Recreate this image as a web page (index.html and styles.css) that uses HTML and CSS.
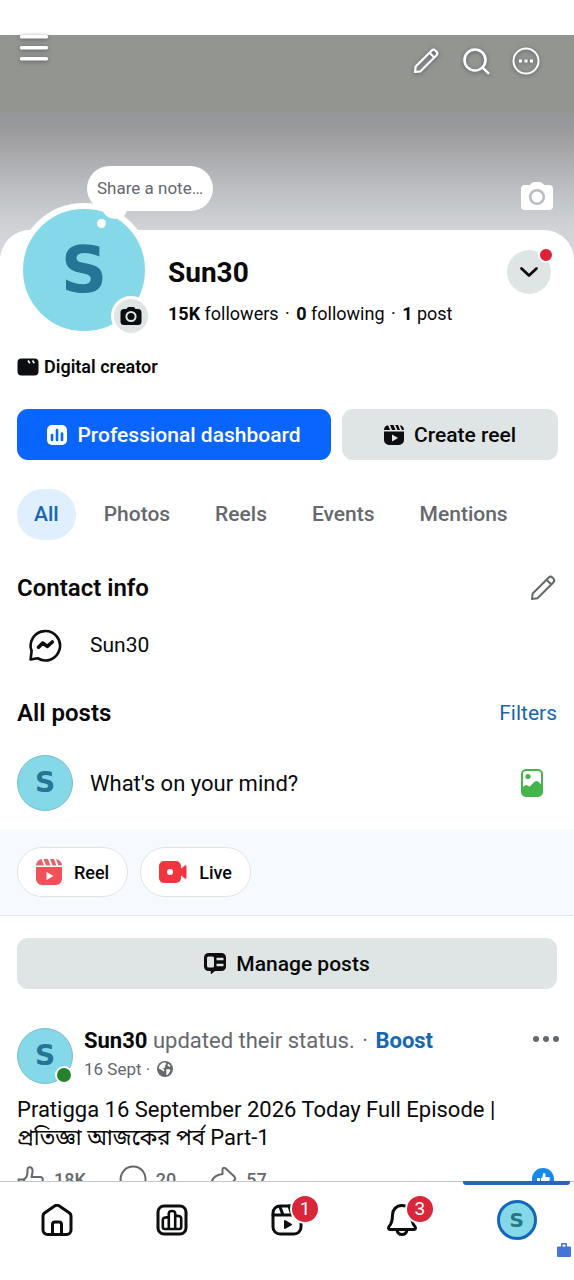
FILE: index.html
```html
<!DOCTYPE html>
<html lang="en">
<head>
<meta charset="utf-8">
<meta name="viewport" content="width=device-width, initial-scale=1">
<title>Sun30</title>
<link rel="stylesheet" href="styles.css">
</head>
<body>
<div class="app">
  <main class="content">
    <header class="cover">
      <div class="cover-bar">
        <button class="icon-btn menu" aria-label="Menu">
          <svg width="36" height="30" viewBox="0 0 36 30" stroke="#fff" stroke-width="3.4" stroke-linecap="round"><path d="M5.500 1.800h25M5.500 12.700h25M5.500 23.700h25"/></svg>
        </button>
        <div class="cover-actions">
          <button class="icon-btn" aria-label="Edit"><svg width="28" height="28" viewBox="0 0 28 28" fill="none" stroke="#fff" stroke-width="2.200" stroke-linejoin="round"><path d="M3 25l.7-5.500L19.500 3.700a2.900 2.900 0 0 1 4.100 0l.7.7a2.900 2.900 0 0 1 0 4.100L8.500 24.300z"/><path d="M17.500 5.700l4.800 4.800"/></svg></button>
          <button class="icon-btn" aria-label="Search"><svg width="28" height="28" viewBox="0 0 28 28" fill="none" stroke="#fff" stroke-width="2.600" stroke-linecap="round"><circle cx="13" cy="13" r="10.500"/><path d="M20.700 20.700l5.500 5.500"/></svg></button>
          <button class="icon-btn" aria-label="More"><svg width="28" height="28" viewBox="0 0 28 28" fill="none" stroke="#fff" stroke-width="2"><circle cx="14" cy="14" r="12.500"/><path d="M7 14h3M12.500 14h3M18 14h3" stroke-width="3"/></svg></button>
        </div>
      </div>
      <button class="icon-plain cover-camera" aria-label="Change cover photo"><svg width="34" height="30" viewBox="0 0 34 30"><path fill="#fff" d="M5 4h5c1.500-2.200 2.500-3 4.500-3h5c2 0 3 .8 4.500 3h5a4 4 0 0 1 4 4v17a4 4 0 0 1-4 4H5a4 4 0 0 1-4-4V8a4 4 0 0 1 4-4z"/><circle cx="17" cy="16" r="6.800" fill="none" stroke="#b9bcc0" stroke-width="2.600"/></svg></button>
    </header>

    <div class="sheet">
      <section class="profile">
        <div class="avatar avatar-lg">S
          <button class="note">Share a note…</button>
          <span class="note-dot"></span>
          <button class="avatar-camera" aria-label="Change profile photo"><svg width="22" height="20" viewBox="0 0 22 20"><path fill="#0b0d0e" d="M4 3h2.500C7.500 1.300 8.200 1 9.500 1h3c1.300 0 2 .3 3 2H18a3.500 3.500 0 0 1 3.500 3.500v9A3.500 3.500 0 0 1 18 19H4a3.500 3.500 0 0 1-3.500-3.500v-9A3.500 3.500 0 0 1 4 3z"/><circle cx="11" cy="10.500" r="4.600" fill="none" stroke="#dfe5e5" stroke-width="2"/></svg></button>
        </div>
        <div class="identity">
          <h1>Sun30</h1>
          <p><b>15K</b> followers <i>·</i> <b>0</b> following <i>·</i> <b>1</b> post</p>
        </div>
        <button class="switcher" aria-label="Switch profile"><svg width="20" height="12" viewBox="0 0 20 12" fill="none" stroke="#0b0d0e" stroke-width="2.800" stroke-linecap="round" stroke-linejoin="round"><path d="M2.500 2.500L10 9.500l7.500-7"/></svg><span class="alert-dot"></span></button>
      </section>

      <p class="category"><svg width="22" height="18" viewBox="0 0 22 18"><rect x=".5" y=".5" width="21" height="17" rx="4" fill="#0b0d0e"/><path d="M11 2.500l1.800 2.800M15.500 2.500l1.800 2.800" stroke="#fff" stroke-width="1.600"/></svg>Digital creator</p>

      <div class="cta">
        <button class="btn primary"><svg width="20" height="20" viewBox="0 0 20 20"><rect width="20" height="20" rx="5" fill="#fff"/><path d="M5 10v5M10 5v10M15 8.500V15" stroke="#0866ff" stroke-width="2.600" stroke-linecap="round"/></svg>Professional dashboard</button>
        <button class="btn"><svg width="20" height="20" viewBox="0 0 20 20" fill="#0b0d0e"><path d="M0 5a5 5 0 0 1 4-4.800L6.200 5zM6 0h3.500l2 5H8zM11.300 0H14l2 5h-2.600zM15.800.2A5 5 0 0 1 20 5h-2z"/><path fill-rule="evenodd" d="M0 6.500h20V15a5 5 0 0 1-5 5H5a5 5 0 0 1-5-5zM8 9.500v7l6-3.500z"/></svg>Create reel</button>
      </div>

      <nav class="tabs" aria-label="Profile sections">
        <a class="active" href="#all">All</a><a href="#photos">Photos</a><a href="#reels">Reels</a><a href="#events">Events</a><a href="#mentions">Mentions</a>
      </nav>

      <section class="contact">
        <div class="section-head">
          <h2>Contact info</h2>
          <button class="icon-plain" aria-label="Edit contact info"><svg width="28" height="28" viewBox="0 0 28 28" fill="none" stroke="#65686c" stroke-width="2" stroke-linejoin="round"><path d="M3 25l.7-5.500L19.500 3.700a2.900 2.900 0 0 1 4.100 0l.7.7a2.900 2.900 0 0 1 0 4.100L8.500 24.300z"/><path d="M17.500 5.700l4.800 4.800"/></svg></button>
        </div>
        <div class="contact-row">
          <svg width="34" height="34" viewBox="0 0 34 34" fill="none" stroke="#0b0d0e" stroke-linejoin="round" stroke-linecap="round"><path stroke-width="2.600" d="M2.600 31.500l1-8.500A14.700 14.700 0 1 1 9.500 30.200z"/><path stroke-width="3.600" d="M10.500 19.200l4.200-4.200 4.600 3.400 5-4.400"/></svg>
          <span>Sun30</span>
        </div>
      </section>

      <section class="posts-head section-head">
        <h2>All posts</h2>
        <a class="filters" href="#filters">Filters</a>
      </section>

      <div class="composer">
        <span class="avatar avatar-sm">S</span>
        <button class="prompt">What's on your mind?</button>
        <button class="icon-plain photo" aria-label="Add photo"><svg width="22" height="28" viewBox="0 0 22 28"><rect x="1" y="1" width="20" height="26" rx="4" fill="#fff" stroke="#45b449" stroke-width="2"/><circle cx="7" cy="7.500" r="2.600" fill="#45b449"/><path fill="#45b449" d="M1 18.500l3-2q1.500-1 3 .2l1.500 1 4.500-4.500q2.500-2.500 5 0l3 3V23a4 4 0 0 1-4 4H5a4 4 0 0 1-4-4z"/></svg></button>
      </div>

      <div class="quick">
        <button class="chip"><svg width="26" height="26" viewBox="0 0 26 26"><path fill="#e2646b" d="M0 6.500A6.500 6.500 0 0 1 5.500 0l2.500 6.500zM7.500 0h4.500l2.500 6.500h-4.500zM14 0h4l2.500 6.500h-4zM20 .2a6.500 6.500 0 0 1 6 6.300h-3.500z"/><path fill="#f4505a" fill-rule="evenodd" d="M0 8h26v12a6 6 0 0 1-6 6H6a6 6 0 0 1-6-6zM10.500 13v8l7-4z"/></svg>Reel</button>
        <button class="chip"><svg width="28" height="22" viewBox="0 0 28 22" fill="#f0353f"><path fill-rule="evenodd" d="M5 0h12a5 5 0 0 1 5 5v12a5 5 0 0 1-5 5H5a5 5 0 0 1-5-5V5a5 5 0 0 1 5-5zm6 8a3 3 0 1 0 0 6 3 3 0 0 0 0-6z"/><path d="M21.500 8L26 4.500q1.500-.8 1.500 1v11q0 1.800-1.500 1l-4.500-3.500z"/></svg>Live</button>
      </div>

      <button class="btn manage"><svg width="22" height="21" viewBox="0 0 22 21"><path fill="#0b0d0e" d="M4.500 0h13A4.500 4.500 0 0 1 22 4.500v9a4.500 4.500 0 0 1-4.500 4.500H11l-3.300 2.700q-1 .6-1-.6V18H4.500A4.500 4.500 0 0 1 0 13.500v-9A4.500 4.500 0 0 1 4.500 0z"/><rect x="3" y="3.500" width="7" height="11" rx="1.500" fill="#dfe5e5"/><path d="M12.500 6h7M12.500 12h7" stroke="#dfe5e5" stroke-width="2.600"/></svg>Manage posts</button>

      <article class="post">
        <header class="post-head">
          <span class="avatar avatar-sm">S<span class="online"></span></span>
          <div class="post-meta">
            <p class="post-title"><b>Sun30</b> updated their status. <i>·</i> <a href="#boost">Boost</a></p>
            <p class="post-time">16 Sept · <svg width="16" height="16" viewBox="0 0 16 16"><circle cx="8" cy="8" r="8" fill="#65686c"/><path fill="#fff" d="M2.500 4.500Q4.500 1.500 8 1.300L9.500 3 7.800 4.500 8.500 6 6 7.500 7.500 9 6.500 10.500 4 8.500 1.800 7.500zM11 2.500l2.500 2.300-1 1.200-2-1.500zM9 8.500l3-.5 1.500 1.500-2.500 4-2 .5.500-2.500z"/></svg></p>
          </div>
          <button class="icon-plain more" aria-label="Post options"><svg width="26" height="6" viewBox="0 0 26 6" fill="#65686c"><circle cx="3" cy="3" r="3"/><circle cx="13" cy="3" r="3"/><circle cx="23" cy="3" r="3"/></svg></button>
        </header>
        <p class="post-text">Pratigga 16 September 2026 Today Full Episode | <span lang="bn">প্রতিজ্ঞা আজকের পর্ব</span> Part-1</p>
        <div class="reactions">
          <button><svg width="28" height="28" viewBox="0 0 28 28"><path d="M1.500 14.500h5c2.500-1 4-4.500 4-8V4.500c0-3 4.500-3 5 .5.300 2.500-.3 4.500-1 7H23q3 .2 2.800 2.800L23.500 24q-.8 2.500-3.500 2.500H2.500zM7 14.500v12"/></svg>18K</button>
          <button><svg width="28" height="28" viewBox="0 0 28 28"><path d="M14 1.500a12.500 12.500 0 1 1-5.500 23.700L2.500 26.500l1-6A12.500 12.500 0 0 1 14 1.500z"/></svg>20</button>
          <button><svg width="28" height="28" viewBox="0 0 28 28"><path d="M13.500 9V4.500q.5-2.500 3-1.200l9 8.500q1.500 1.700 0 3.400l-9 8.500q-2.500 1-3-1.200V18Q5 18 2 23.500 1 10.500 13.500 9z"/></svg>57</button>
          <span class="like"><svg width="22" height="22" viewBox="0 0 22 22"><circle cx="11" cy="11" r="11" fill="#1489ee"/><path fill="#fff" d="M5 10h3v7H5zM9 10.500Q11 9 11 5.500q1.500-1.300 2.500.7V9H17q1 .5.800 2L16.500 16q-.5 1-1.500 1H9z"/></svg></span>
        </div>
      </article>
    </div>
  </main>

  <nav class="bottom-nav" aria-label="Main">
    <a href="#home" aria-label="Home"><svg width="32" height="32" viewBox="0 0 32 32"><path d="M2 12q0-1.800 1.500-3L14 1.800q2-1.300 4 0L28.500 9q1.500 1.200 1.500 3v14a4.500 4.500 0 0 1-4.500 4.500h-19A4.500 4.500 0 0 1 2 26z"/><path d="M11.500 30V20.500q0-2.500 2.500-2.500h4q2.500 0 2.500 2.500V30"/></svg></a>
    <a href="#insights" aria-label="Insights"><svg width="32" height="32" viewBox="0 0 32 32"><rect x="2" y="2" width="28" height="28" rx="6"/><path stroke-width="2.600" d="M12.800 25V9.500q0-2.500 3.200-2.500t3.200 2.500V25M12.800 13.500q-6-.8-6 2.500v7q0 2 2 2h14.400q2 0 2-2V14.500q0-3.300-6-2.500"/></svg></a>
    <a href="#reels-feed" aria-label="Reels"><span class="nav-icon"><svg width="32" height="32" viewBox="0 0 32 32"><rect x="2" y="2" width="28" height="28" rx="7"/><path d="M2 11h28M9 3l3 8M18 2l3 9"/><path fill="#0b0d0e" stroke-width="2" d="M14 17v7l6-3.500z"/></svg><span class="badge">1</span></span></a>
    <a href="#notifications" aria-label="Notifications"><span class="nav-icon"><svg width="32" height="32" viewBox="0 0 32 32"><path d="M16 1.500c6 0 9.500 4.500 9.500 9.500 0 6 1 9 3.500 11.500 1 1.500.5 3-1 3H4c-1.500 0-2-1.500-1-3C5.500 20 6.500 17 6.500 11c0-5 3.500-9.500 9.500-9.500zM11 26c.5 3 2.500 4.500 5 4.500s4.500-1.500 5-4.500"/></svg><span class="badge">3</span></span></a>
    <a class="current" href="#profile" aria-label="Profile"><span class="nav-icon"><span class="avatar avatar-nav">S</span></span><svg class="case" width="14" height="14" viewBox="0 0 14 14"><path fill="#4474d9" d="M1 3.500h3V1q0-1 1-1h4q1 0 1 1v2.500h3q1 0 1 1V13q0 1-1 1H1q-1 0-1-1V4.500q0-1 1-1zM5.500 1.500v2h3v-2z"/></svg></a>
  </nav>
</div>
</body>
</html>
```
FILE: styles.css
```css
* { box-sizing: border-box; }
body { margin: 0; background: #fff; color: #080809; font-family: Roboto, "Noto Sans Bengali", "Noto Sans", sans-serif; font-size: 20px; }
h1, h2, p { margin: 0; }
i { font-style: normal; margin: 0 2px; }
button { margin: 0; padding: 0; border: 0; background: none; font: inherit; color: inherit; cursor: pointer; }
a { color: inherit; text-decoration: none; }
svg { display: block; flex: none; }

.app { display: flex; flex-direction: column; height: 100vh; }
.content { flex: 1; min-height: 0; overflow: hidden; padding-top: 35px; }

.cover {
  display: flex; flex-direction: column; justify-content: space-between;
  height: 225px; padding: 0 20px 49px 16px;
  background: linear-gradient(#939590 0, #939590 76px, #94979d 83px, #9b9b9d 96px, #aaaaad 120px, #b7b9bc 145px, #c5c8cb 170px, #d2d3d7 195px, #d8d8dc 225px);
}
.cover-bar { display: flex; align-items: flex-start; justify-content: space-between; }
.icon-btn svg { filter: drop-shadow(0 1px 2px rgb(60 60 80 / 65%)); }
.cover-actions { display: flex; gap: 22px; padding: 12px 14px 0 0; }
.cover-camera { align-self: flex-end; }

.sheet { position: relative; margin-top: -30px; border-radius: 30px 30px 0 0; background: #fff; }
.profile { display: flex; align-items: flex-start; padding: 0 23px 0 17px; }
.avatar {
  position: relative; display: flex; flex: none; align-items: center; justify-content: center;
  border-radius: 50%; background: #84d8e7; color: #267596;
  font-family: "DejaVu Sans", "Noto Sans", sans-serif; font-weight: 700; line-height: 1;
}
.avatar-lg { width: 134px; height: 134px; margin-top: -27px; border: 6px solid #fff; font-size: 64px; }
.avatar-sm { width: 56px; height: 56px; border: 1px solid #79bfcb; font-size: 28px; }
.avatar-nav { width: 40px; height: 40px; border: 3px solid #1467b8; font-size: 20px; color: #2a7583; }
.note {
  position: absolute; left: 64px; top: -43px; height: 45px; padding: 0 10px; border-radius: 23px;
  background: #fff; color: #65686c; font: 400 17px/45px Roboto, sans-serif; white-space: nowrap;
}
.note::after { content: ""; position: absolute; left: 16px; bottom: -8px; width: 24px; height: 20px; border-radius: 50%; background: #fff; }
.note-dot { position: absolute; left: 74px; top: 10px; width: 9px; height: 9px; border-radius: 50%; background: #fff; }
.avatar-camera {
  position: absolute; right: -6px; bottom: -5px; display: grid; place-items: center;
  width: 40px; height: 40px; border: 3px solid #fff; border-radius: 50%; background: #dfe5e5;
}
.identity { flex: 1; padding: 26px 0 0 17px; }
h1 { font-size: 28px; line-height: 34px; font-weight: 700; }
.identity p { margin-top: 12px; font-size: 18px; line-height: 23px; white-space: nowrap; }
.switcher { position: relative; display: grid; place-items: center; width: 44px; height: 44px; margin-top: 20px; border-radius: 50%; background: #dfe5e5; }
.alert-dot { position: absolute; right: -3px; top: -3px; width: 16px; height: 16px; border: 2px solid #fff; border-radius: 50%; background: #df2135; }

.category { display: flex; align-items: center; gap: 5px; margin: 19px 17px 0; font-size: 18px; line-height: 22px; font-weight: 600; }
.cta { display: flex; gap: 11px; margin: 31px 16px 0 17px; }
.btn {
  display: flex; flex: 216; align-items: center; justify-content: center; gap: 10px;
  height: 51px; border-radius: 11px; background: #dfe5e5; font-size: 21px; font-weight: 500; white-space: nowrap;
}
.btn.primary { flex: 314; background: #0866ff; color: #fff; }

.tabs { display: flex; gap: 11px; margin: 29px 17px 0; color: #65686c; font-size: 21px; line-height: 51px; font-weight: 500; }
.tabs a { padding: 0 17px; border-radius: 26px; }
.tabs .active { background: #dfeffe; color: #1467b0; }

.section-head { display: flex; align-items: center; justify-content: space-between; height: 28px; margin: 0 17px; }
h2 { font-size: 24px; line-height: 28px; font-weight: 600; }
.contact { padding-top: 34px; }
.contact-row { display: flex; align-items: center; gap: 28px; height: 56px; margin: 15px 28px 0; font-size: 21px; }
.posts-head { margin-top: 26px; }
.filters { color: #1467b0; font-size: 21px; }

.composer { display: flex; align-items: center; gap: 17px; margin: 28px 31px 18px 17px; }
.prompt { flex: 1; text-align: left; font-size: 22px; }
.quick { display: flex; gap: 12px; padding: 18px 17px; border-bottom: 1px solid #e6e8eb; background: #f6faff; }
.chip { display: flex; align-items: center; gap: 12px; height: 50px; padding: 0 18px; border: 1px solid #e1e3e5; border-radius: 25px; background: #fff; font-size: 18px; font-weight: 500; }
.manage { width: calc(100% - 34px); margin: 22px 17px 0; }

.post { margin: 39px 17px 0; }
.post-head { display: flex; align-items: flex-start; gap: 11px; }
.post-meta { flex: 1; color: #65686c; }
.post-title { font-size: 22px; line-height: 26px; }
.post-title b { color: #080809; }
.post-title a { color: #1467b0; font-weight: 700; }
.post-time { display: flex; align-items: center; gap: 7px; margin-top: 4px; font-size: 17px; line-height: 22px; }
.more { padding: 8px 0; margin-right: -2px; }
.online { position: absolute; right: -1px; bottom: -1px; width: 18px; height: 18px; border: 2px solid #fff; border-radius: 50%; background: #24832c; }
.post-text { margin-top: 12px; font-size: 22px; line-height: 28px; }
.reactions { display: flex; gap: 33px; margin-top: 13px; color: #65686c; font-size: 18px; font-weight: 500; }
.reactions button { display: flex; align-items: center; gap: 9px; }
.reactions button svg { fill: none; stroke: #65686c; stroke-width: 2; stroke-linejoin: round; }
.like { margin: 3px 3px 0 auto; }

.bottom-nav { display: flex; flex: none; height: 99px; border-top: 1px solid #c5c8cc; background: #fff; }
.bottom-nav a { position: relative; display: flex; flex: 1; justify-content: center; align-items: flex-start; padding-top: 22px; }
.bottom-nav a > svg:not(.case), .nav-icon > svg { fill: none; stroke: #0b0d0e; stroke-width: 3; stroke-linejoin: round; stroke-linecap: round; }
.nav-icon { position: relative; }
.badge {
  position: absolute; left: 19px; top: -10px; width: 30px; height: 30px; border: 2px solid #fff; border-radius: 50%;
  background: #d9263a; color: #fff; text-align: center; font-size: 19px; line-height: 26px;
}
.bottom-nav .current { padding-top: 18px; }
.current::before { content: ""; position: absolute; left: 4px; right: 4px; top: -1px; height: 4px; border-radius: 0 0 3px 3px; background: #2d62b8; }
.case { position: absolute; right: 3px; bottom: 23px; }
```
